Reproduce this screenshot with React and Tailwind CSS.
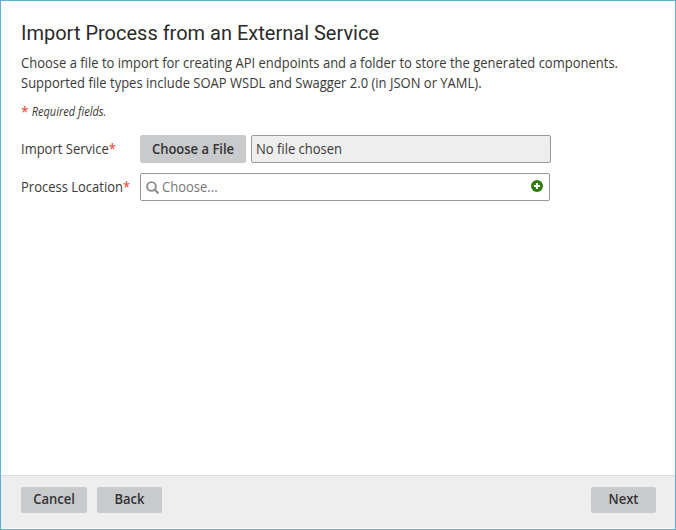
const font = "font-['Open_Sans','Noto_Sans',sans-serif]";

function Button({ children, className }) {
  return (
    <button className={`rounded-[2px] bg-[#c9cacc] text-[13px] font-semibold leading-none text-[#333] ${className}`}>
      <span className="inline-block scale-y-[1.07]">{children}</span>
    </button>
  );
}

function Label({ children }) {
  return (
    <label className="w-[119px] shrink-0 scale-y-[1.07] whitespace-nowrap pt-px">
      {children}
      <span className="text-[#e8432e]">*</span>
    </label>
  );
}

export default function App() {
  return (
    <div className={`flex h-[530px] w-[676px] flex-col border border-[#5faeda] bg-white text-[13px] text-[#3a3a3a] ${font}`}>
      <main className="flex-1 pl-5 pt-5">
        <h1 className="font-[Roboto,sans-serif] text-[20px] leading-6 text-[#2b2b2b]">Import Process from an External Service</h1>
        <div className="mt-[8px] whitespace-nowrap leading-5">
          <p className="scale-y-[1.07]">
            Choose a file to import for creating API endpoints and a folder to store the generated components.
          </p>
          <p className="scale-y-[1.07]">
            Supported file types include SOAP WSDL and Swagger 2.0 (in JSON or YAML).
          </p>
        </div>
        <p className="mt-[9px] flex h-5 items-center text-[11px] italic leading-5">
          <span className="mr-[3px] text-[14px] not-italic text-[#e8432e]">*</span>
          <span className="scale-y-[1.07]">Required fields.</span>
        </p>
        <div className="mt-[13px] flex h-7 items-center">
          <Label>Import Service</Label>
          <Button className="h-7 w-[106px]">Choose a File</Button>
          <div className="ml-[5px] flex h-7 w-[300px] items-center rounded-[2px] border border-[#999] bg-[#eee] pl-[4px]">
            <span className="scale-y-[1.07] pt-px">No file chosen</span>
          </div>
        </div>
        <div className="mt-[10px] flex h-7 items-center">
          <Label>Process Location</Label>
          <div className="flex h-7 w-[410px] items-center rounded-[2px] border border-[#999] bg-white pl-[5px] pr-[6px] text-[#777]">
            <svg className="mr-[3px] size-[13px]" viewBox="0 0 13 13" fill="none" stroke="#8c8c8c" strokeWidth="1.9">
              <circle cx="5.5" cy="5.5" r="4.4" />
              <path d="M8.8 8.8 11.8 11.8" strokeWidth="2.2" strokeLinecap="round" />
            </svg>
            <span className="flex-1 scale-y-[1.07] pt-px">Choose...</span>
            <svg className="mb-[2px] size-3" viewBox="0 0 12 12">
              <circle cx="6" cy="6" r="6" fill="#2f7d0c" />
              <path d="M6 3v6M3 6h6" stroke="#fff" strokeWidth="2" />
            </svg>
          </div>
        </div>
      </main>
      <footer className="flex h-[54px] items-center border-b border-t border-b-white border-t-[#ddd] bg-[#eee] pl-5 pr-[19px] pb-[5px]">
        <Button className="h-[26px] w-[66px]">Cancel</Button>
        <Button className="ml-[10px] h-[26px] w-[65px]">Back</Button>
        <Button className="ml-auto h-[26px] w-[65px]">Next</Button>
      </footer>
    </div>
  );
}
